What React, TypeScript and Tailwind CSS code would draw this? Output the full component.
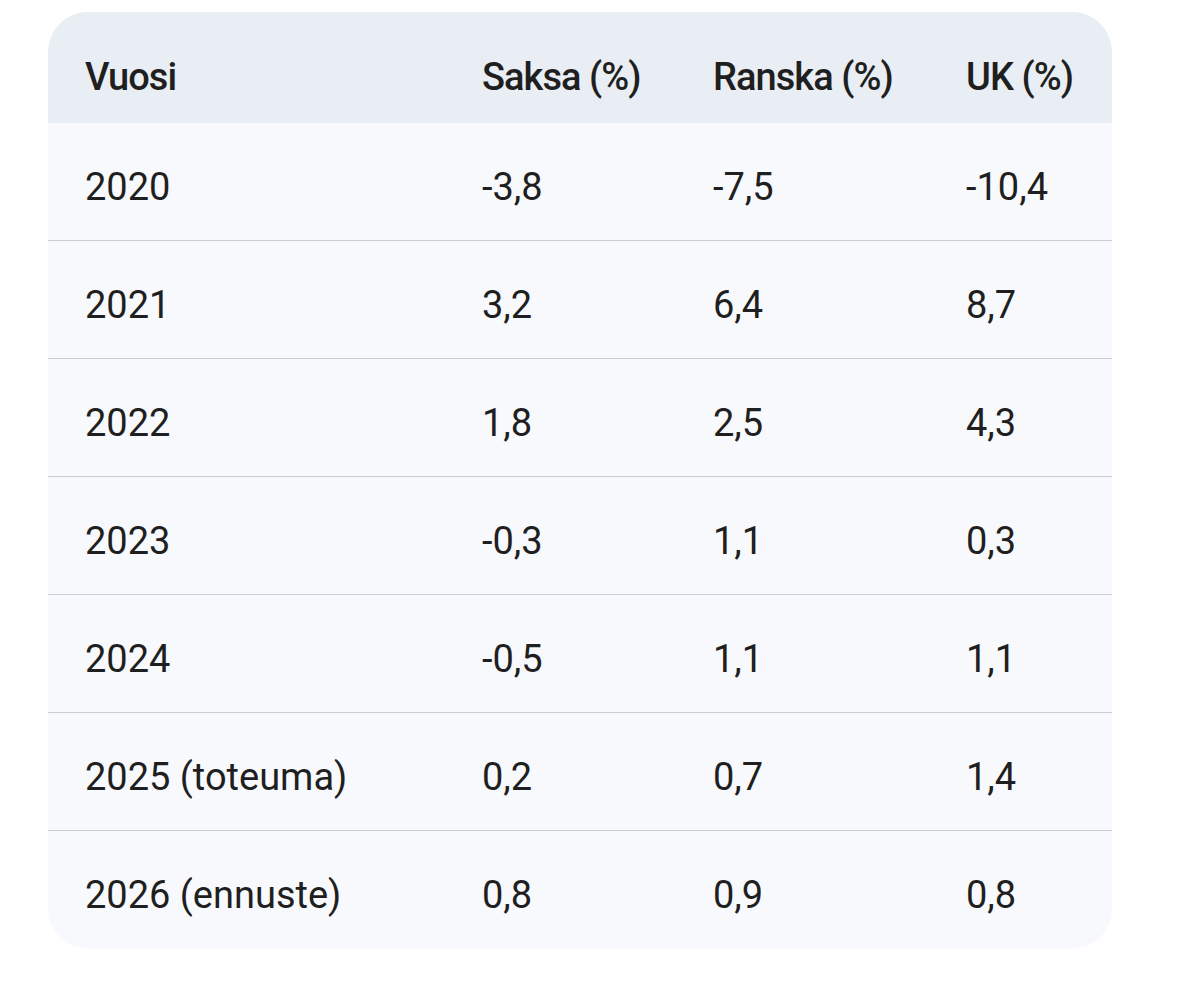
import React from "react";

const rows: [string, string, string, string][] = [
  ["2020", "-3,8", "-7,5", "-10,4"],
  ["2021", "3,2", "6,4", "8,7"],
  ["2022", "1,8", "2,5", "4,3"],
  ["2023", "-0,3", "1,1", "0,3"],
  ["2024", "-0,5", "1,1", "1,1"],
  ["2025 (toteuma)", "0,2", "0,7", "1,4"],
  ["2026 (ennuste)", "0,8", "0,9", "0,8"],
];

export default function App() {
  return (
    <div
      className="min-h-[989px] w-[1200px] bg-white pl-[48px] pt-[12px] text-[#1f1f1f]"
      style={{ fontFamily: "Roboto, 'Noto Sans', sans-serif" }}
    >
      <div className="w-[1064px] overflow-hidden rounded-[40px] bg-[#f8f9fc]">
        <div className="grid h-[111px] grid-cols-[397px_231px_253px_1fr] bg-[#e9edf4] pl-[37px] pt-[43px] text-[38px] font-medium leading-[44px] tracking-[-0.025em]">
          <div>Vuosi</div>
          <div>Saksa (%)</div>
          <div>Ranska (%)</div>
          <div>UK (%)</div>
        </div>
        {rows.map((r, i) => (
          <div
            key={r[0]}
            className={
              "grid h-[118px] grid-cols-[397px_231px_253px_1fr] pl-[37px] pt-[42px] text-[38px] leading-[44px] " +
              (i < rows.length - 1 ? "border-b-[1.5px] border-[#c9ccd1]" : "")
            }
          >
            <div>{r[0]}</div>
            <div>{r[1]}</div>
            <div>{r[2]}</div>
            <div>{r[3]}</div>
          </div>
        ))}
      </div>
    </div>
  );
}
